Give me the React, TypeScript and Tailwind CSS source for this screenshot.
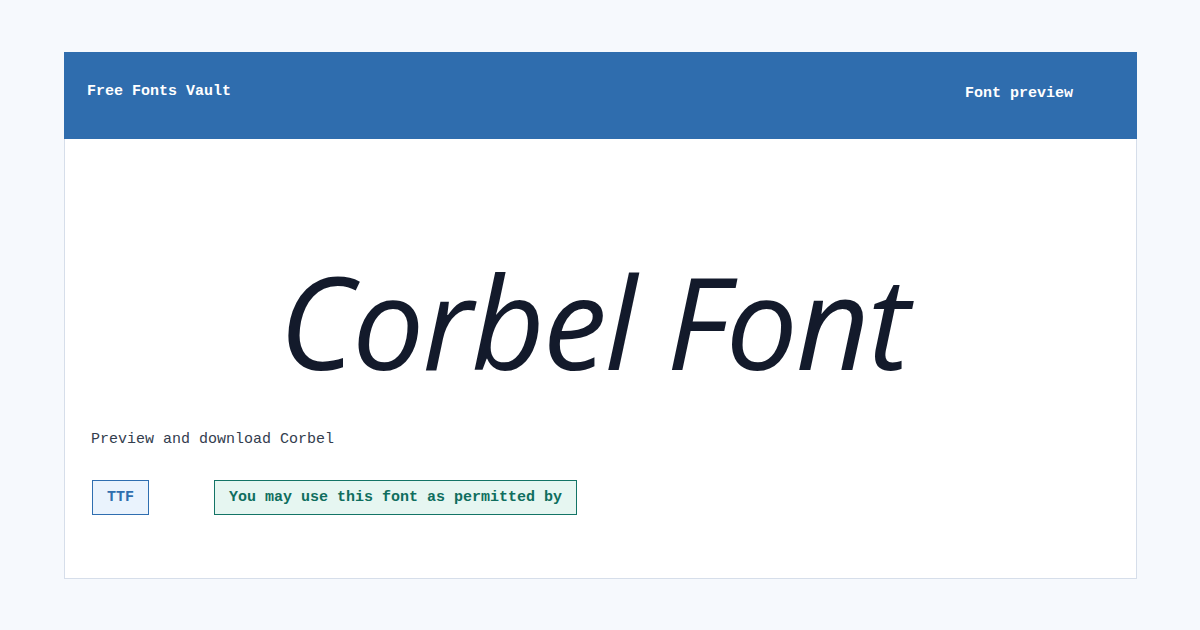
export default function App() {
  const mono = "font-['Liberation_Mono','DejaVu_Sans_Mono',monospace]";

  return (
    <div className="w-[1200px] h-[630px] bg-[#f6f9fd] pt-[52px] pl-[64px]">
      <div className="w-[1073px] flex flex-col">
        <header className={`h-[87px] bg-[#2f6dae] flex justify-between items-start pl-[23px] pr-[64px] pt-[31px] text-white text-[15px] leading-[17px] font-bold ${mono}`}>
          <span>Free Fonts Vault</span>
          <span className="mt-[2px]">Font preview</span>
        </header>
        <main className="h-[440px] bg-white border border-t-0 border-[#d6deea] flex flex-col px-[26px]">
          <h1 className="mt-[118px] pr-[14px] text-center text-[128px] leading-[128px] italic tracking-[-0.015em] text-[#131a2b] font-['Open_Sans','Noto_Sans',sans-serif]">
            Corbel Font
          </h1>
          <p className={`mt-[46px] text-[15px] leading-[17px] text-[#333d4e] ${mono}`}>
            Preview and download Corbel
          </p>
          <div className={`mt-[32px] flex gap-[65px] pl-[1px] text-[15px] leading-[17px] font-bold ${mono}`}>
            <span className="border border-[#2f6eb0] bg-[#eaf3fd] text-[#2f6eae] px-[14px] py-[8px]">TTF</span>
            <span className="border border-[#137466] bg-[#e6f6f1] text-[#0f6e5e] px-[14px] py-[8px]">
              You may use this font as permitted by
            </span>
          </div>
        </main>
      </div>
    </div>
  );
}
